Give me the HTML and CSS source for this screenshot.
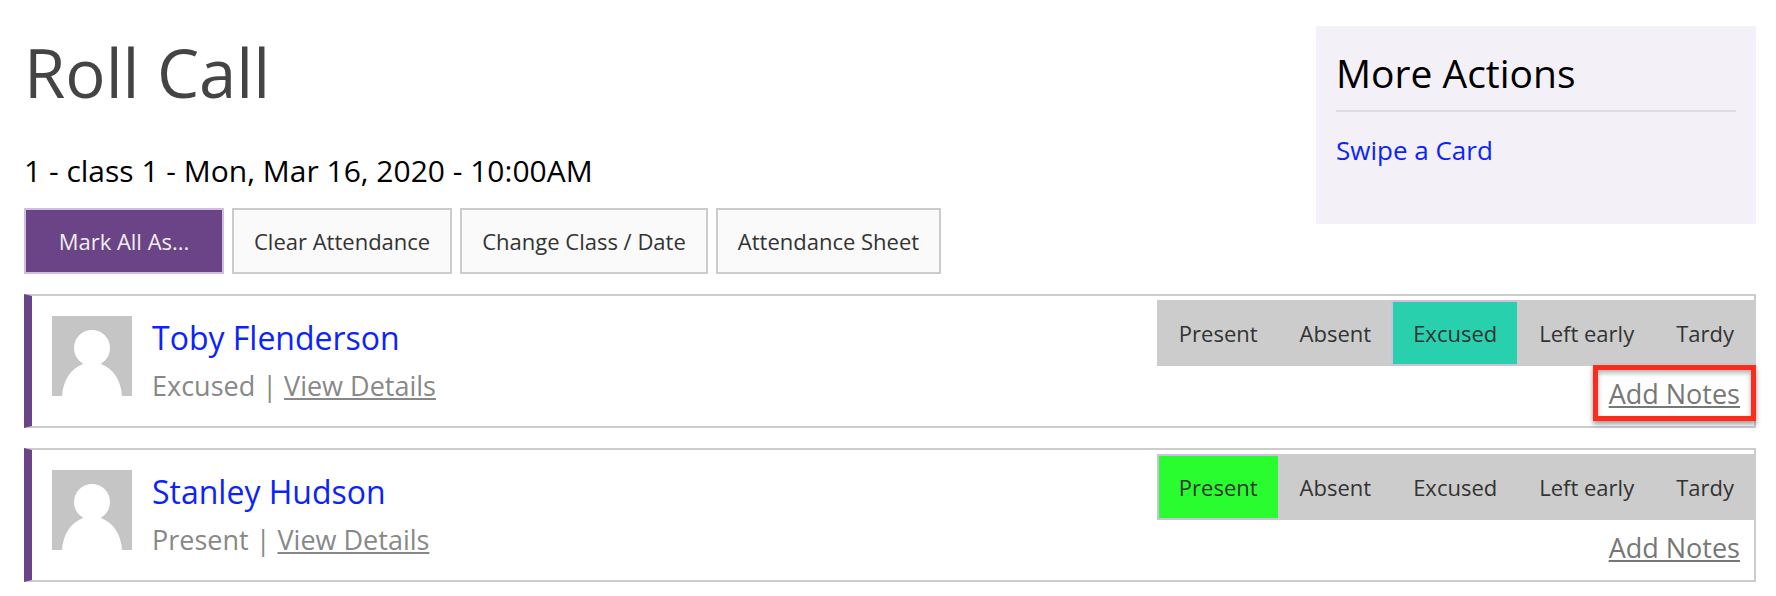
FILE: index.html
```
<!DOCTYPE html>
<html lang="en">
<head>
    <meta charset="UTF-8">
    <meta name="viewport" content="width=device-width, initial-scale=1.0">
    <title>Roll Call</title>
    <link rel="stylesheet" href="styles.css">
</head>
<body>
    <div class="top">
        <main class="intro">
            <h1>Roll Call</h1>
            <h2 class="class-info">1 - class 1 - Mon, Mar 16, 2020 - 10:00AM</h2>
            <div class="toolbar">
                <button type="button" class="btn btn-primary">Mark All As...</button>
                <button type="button" class="btn">Clear Attendance</button>
                <button type="button" class="btn">Change Class / Date</button>
                <button type="button" class="btn">Attendance Sheet</button>
            </div>
        </main>
        <aside class="more-actions">
            <h3>More Actions</h3>
            <a href="#">Swipe a Card</a>
        </aside>
    </div>

    <ul class="roll">
        <li class="student">
            <svg class="avatar" viewBox="0 0 80 80" aria-hidden="true">
                <rect width="80" height="80" fill="#c5c5c5"/>
                <circle cx="40" cy="32" r="18" fill="#fff"/>
                <path fill="#fff" d="M31 46h18v2c13 5 20 17 21 32H10c1-15 8-27 21-32z"/>
            </svg>
            <div class="details">
                <a href="#" class="name">Toby Flenderson</a>
                <div class="status">Excused | <a href="#">View Details</a></div>
            </div>
            <div class="marking">
                <div class="options">
                    <button type="button" class="option">Present</button>
                    <button type="button" class="option">Absent</button>
                    <button type="button" class="option excused">Excused</button>
                    <button type="button" class="option">Left early</button>
                    <button type="button" class="option">Tardy</button>
                </div>
                <a href="#" class="notes highlighted">Add Notes</a>
            </div>
        </li>
        <li class="student">
            <svg class="avatar" viewBox="0 0 80 80" aria-hidden="true">
                <rect width="80" height="80" fill="#c5c5c5"/>
                <circle cx="40" cy="32" r="18" fill="#fff"/>
                <path fill="#fff" d="M31 46h18v2c13 5 20 17 21 32H10c1-15 8-27 21-32z"/>
            </svg>
            <div class="details">
                <a href="#" class="name">Stanley Hudson</a>
                <div class="status">Present | <a href="#">View Details</a></div>
            </div>
            <div class="marking">
                <div class="options">
                    <button type="button" class="option present">Present</button>
                    <button type="button" class="option">Absent</button>
                    <button type="button" class="option">Excused</button>
                    <button type="button" class="option">Left early</button>
                    <button type="button" class="option">Tardy</button>
                </div>
                <a href="#" class="notes">Add Notes</a>
            </div>
        </li>
    </ul>
</body>
</html>
```
FILE: styles.css
```
* {
    box-sizing: border-box;
}

body {
    margin: 0;
    padding: 26px 20px 0 24px;
    background-color: #fff;
    color: #000;
    font-family: "Open Sans", sans-serif;
    font-size: 26px;
    line-height: 36px;
}

h1, h2, h3 {
    margin: 0;
    font-weight: normal;
}

a {
    color: #0b24fb;
    text-decoration: none;
}

.top {
    display: flex;
    justify-content: space-between;
    align-items: flex-start;
}

h1 {
    color: #444;
    font-size: 67px;
    line-height: 92px;
}

.class-info {
    margin-top: 33px;
    font-size: 30px;
    line-height: 40px;
}

.toolbar {
    display: flex;
    gap: 8px;
    margin-top: 17px;
}

.btn,
.option {
    height: 66px;
    padding: 0 20px;
    border: 2px solid #ccc;
    background-color: #fafafa;
    color: #333;
    font-family: inherit;
    font-size: 22px;
    cursor: pointer;
}

.btn-primary {
    min-width: 200px;
    border-color: #cdbfdd;
    background-color: #6a4487;
    color: #eee;
}

.more-actions {
    width: 440px;
    min-height: 198px;
    padding: 20px;
    background-color: #f3f0f8;
}

.more-actions h3 {
    margin-bottom: 20px;
    padding-bottom: 10px;
    border-bottom: 2px solid #dddbe0;
    font-size: 39px;
    line-height: 54px;
}

.roll {
    margin: 20px 0 0;
    padding: 0;
    list-style: none;
}

.student {
    display: flex;
    min-height: 134px;
    margin-bottom: 20px;
    border: 2px solid #ccc;
    border-left: 8px solid #6a4487;
}

.avatar {
    width: 80px;
    height: 80px;
    margin: 20px;
}

.details {
    flex: 1;
    padding-top: 20px;
}

.name {
    display: block;
    font-size: 32px;
    line-height: 44px;
}

.status {
    margin-top: 8px;
    color: #888;
    font-size: 27px;
}

.status a,
.notes {
    color: #888;
    text-decoration: underline;
}

.marking {
    display: flex;
    flex-direction: column;
    align-items: flex-end;
    margin-right: -2px; /* buttons cover the row border */
    padding-top: 4px;
}

.options {
    display: flex;
}

.option {
    border-color: #ccc;
    background-color: #ccc;
}

.option + .option {
    margin-left: -2px;
}

.option.present {
    border-color: #cdbfdd;
    background-color: #29fd2f;
}

.option.excused {
    border-color: #cdbfdd;
    background-color: #29d0ae;
}

.notes {
    margin-top: -1px;
    padding: 6px 11px 4px;
    border: 5px solid transparent;
    color: #777;
    font-size: 27px;
}

.notes.highlighted {
    border-color: #fc2b1c;
    box-shadow: 0 3px 5px rgba(0, 0, 0, 0.4), inset 0 3px 5px rgba(0, 0, 0, 0.3);
}
```
